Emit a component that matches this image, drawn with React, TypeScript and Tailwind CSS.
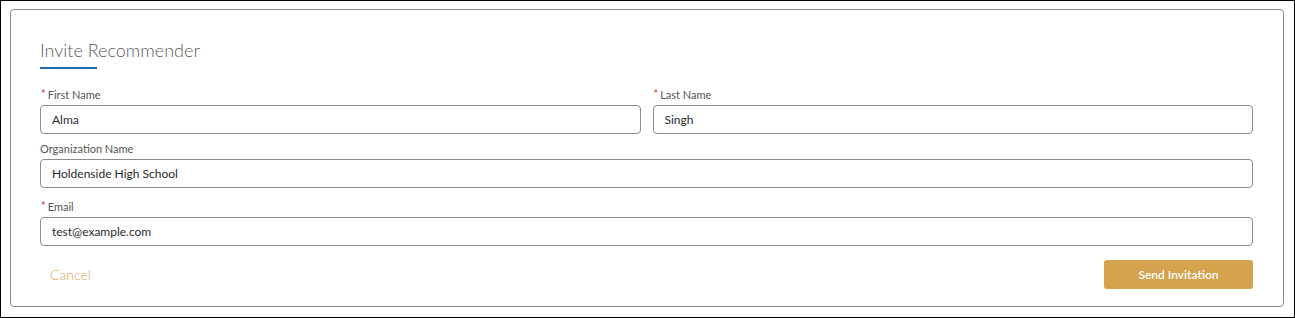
import React from "react";

function Label({ text, required }: { text: string; required?: boolean }) {
  return (
    <div className="h-[16px] flex items-center text-[11px] leading-[16px] text-[#555]">
      {required && <span className="text-[#c23934] text-[11px] ml-[1px] mr-[2px] relative top-[-1px]">*</span>}
      <span>{text}</span>
    </div>
  );
}

function Input({ value }: { value: string }) {
  return (
    <div className="h-[29px] border border-[#8c8c8c] rounded-[4px] bg-white flex items-center pl-[11px] text-[12px] text-[#2a2a2a]">
      {value}
    </div>
  );
}

export default function App() {
  return (
    <div
      className="w-[1295px] h-[318px] border border-black bg-white pt-[8px] pl-[9px]"
      style={{ fontFamily: "Lato, 'Noto Sans', sans-serif" }}
    >
      <div className="w-[1274px] h-[298px] border border-[#8a8a8a] rounded-[4px] pl-[29px] pr-[30px] pt-[28px]">
        <div className="text-[18px] leading-[24px] font-light text-[#5a5a5a]">Invite Recommender</div>
        <div className="mt-[5px] h-[2px] w-[57px] bg-[#1f6fb5]" />
        <div className="mt-[18px] grid grid-cols-2 gap-x-[12px]">
          <div>
            <Label text="First Name" required />
            <div className="mt-[2px]">
              <Input value="Alma" />
            </div>
          </div>
          <div>
            <Label text="Last Name" required />
            <div className="mt-[2px]">
              <Input value="Singh" />
            </div>
          </div>
        </div>
        <div className="mt-[7px]">
          <Label text="Organization Name" />
          <div className="mt-[2px]">
            <Input value="Holdenside High School" />
          </div>
        </div>
        <div className="mt-[11px]">
          <Label text="Email" required />
          <div className="mt-[2px]">
            <Input value="test@example.com" />
          </div>
        </div>
        <div className="mt-[14px] flex items-center justify-between">
          <div className="pl-[10px] text-[14px] font-light text-[#d4a45a]">Cancel</div>
          <div className="w-[149px] h-[29px] rounded-[3px] bg-[#d5a34e] flex items-center justify-center text-[12px] font-semibold text-white">
            Send Invitation
          </div>
        </div>
      </div>
    </div>
  );
}
